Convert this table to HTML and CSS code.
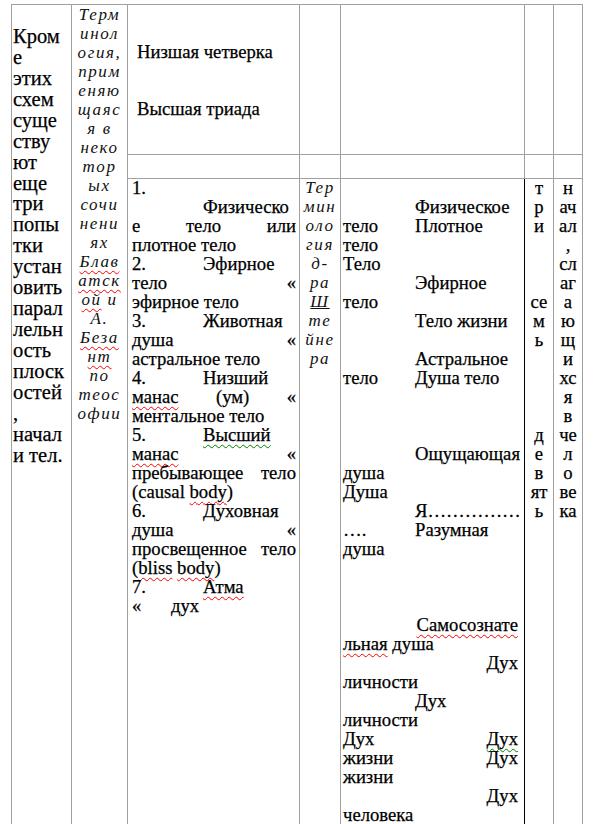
FILE: index.html
```
<!DOCTYPE html>
<html lang="ru">
<head>
<meta charset="utf-8">
<title>Таблица</title>
<link rel="stylesheet" href="styles.css">
</head>
<body>
<div class="tbl">
  <div class="c c1">
    <div class="l1"></div>
    <div class="l1">Кром</div>
    <div class="l1">е</div>
    <div class="l1">этих</div>
    <div class="l1">схем</div>
    <div class="l1">суще</div>
    <div class="l1">ству</div>
    <div class="l1">ют</div>
    <div class="l1">еще</div>
    <div class="l1">три</div>
    <div class="l1">попы</div>
    <div class="l1">тки</div>
    <div class="l1">устан</div>
    <div class="l1">овить</div>
    <div class="l1">парал</div>
    <div class="l1">лельн</div>
    <div class="l1">ость</div>
    <div class="l1">плоск</div>
    <div class="l1">остей</div>
    <div class="l1">,</div>
    <div class="l1">начал</div>
    <div class="l1">и тел.</div>
  </div>
  <div class="c c2 it">
    <div class="li">Терм</div>
    <div class="li">инол</div>
    <div class="li">огия,</div>
    <div class="li">прим</div>
    <div class="li">еняю</div>
    <div class="li">щаяс</div>
    <div class="li">я в</div>
    <div class="li">неко</div>
    <div class="li">тор</div>
    <div class="li">ых</div>
    <div class="li">сочи</div>
    <div class="li">нени</div>
    <div class="li">ях</div>
    <div class="li"><span class="sp">Блав</span></div>
    <div class="li"><span class="sp">атск</span></div>
    <div class="li"><span class="sp">ой</span> и</div>
    <div class="li">А.</div>
    <div class="li"><span class="sp">Беза</span></div>
    <div class="li"><span class="sp">нт</span></div>
    <div class="li">по</div>
    <div class="li">теос</div>
    <div class="li">офии</div>
  </div>

  <div class="c h3">
    <div class="ln">Низшая четверка</div>
    <div class="ln"></div>
    <div class="ln"></div>
    <div class="ln">Высшая триада</div>
  </div>
  <div class="c"></div>
  <div class="c"></div>
  <div class="c"></div>
  <div class="c"></div>

  <div class="c"></div>
  <div class="c"></div>
  <div class="c"></div>
  <div class="c"></div>
  <div class="c"></div>

  <div class="c r3 b3">
    <div class="ln">1.</div>
    <div class="ln"><span class="tab"></span>Физическо</div>
    <div class="ln j"><span>е</span><span>тело</span><span>или</span></div>
    <div class="ln">плотное тело</div>
    <div class="ln"><span class="tab">2.</span>Эфирное</div>
    <div class="ln j"><span>тело</span><span>«</span></div>
    <div class="ln">эфирное тело</div>
    <div class="ln"><span class="tab">3.</span>Животная</div>
    <div class="ln j"><span>душа</span><span>«</span></div>
    <div class="ln">астральное тело</div>
    <div class="ln"><span class="tab">4.</span>Низший</div>
    <div class="ln j"><span class="sp">манас</span><span>(ум)</span><span>«</span></div>
    <div class="ln">ментальное тело</div>
    <div class="ln"><span class="tab">5.</span><span class="gr">Высший</span></div>
    <div class="ln j"><span class="sp">манас</span><span>«</span></div>
    <div class="ln j"><span>пребывающее</span><span>тело</span></div>
    <div class="ln">(causal <span class="sp">body</span>)</div>
    <div class="ln"><span class="tab">6.</span>Духовная</div>
    <div class="ln j"><span>душа</span><span>«</span></div>
    <div class="ln j"><span>просвещенное</span><span>тело</span></div>
    <div class="ln">(<span class="sp">bliss</span> <span class="sp">body</span>)</div>
    <div class="ln"><span class="tab">7.</span><span class="sp">Атма</span></div>
    <div class="ln"><span class="q">«</span>дух</div>
  </div>
  <div class="c r3 b4 it">
    <div class="li">Тер</div>
    <div class="li">мин</div>
    <div class="li">оло</div>
    <div class="li">гия</div>
    <div class="li">д-</div>
    <div class="li">ра</div>
    <div class="li"><span class="ul">Ш</span></div>
    <div class="li">те</div>
    <div class="li">йне</div>
    <div class="li">ра</div>
  </div>
  <div class="c r3 b5">
    <div class="ln"></div>
    <div class="ln"><span class="a"></span>Физическое</div>
    <div class="ln"><span class="a">тело</span>Плотное</div>
    <div class="ln"><span class="a">тело</span></div>
    <div class="ln"><span class="a">Тело</span></div>
    <div class="ln"><span class="a"></span>Эфирное</div>
    <div class="ln"><span class="a">тело</span></div>
    <div class="ln"><span class="a"></span>Тело жизни</div>
    <div class="ln"></div>
    <div class="ln"><span class="a"></span>Астральное</div>
    <div class="ln"><span class="a">тело</span>Душа тело</div>
    <div class="ln"></div>
    <div class="ln"></div>
    <div class="ln"></div>
    <div class="ln"><span class="a"></span>Ощущающая</div>
    <div class="ln"><span class="a">душа</span></div>
    <div class="ln"><span class="a">Душа</span></div>
    <div class="ln"><span class="a"></span>Я……………</div>
    <div class="ln"><span class="a">….</span>Разумная</div>
    <div class="ln"><span class="a">душа</span></div>
    <div class="ln"></div>
    <div class="ln"></div>
    <div class="ln"></div>
    <div class="ln j"><span></span><span class="sp">Самосознате</span></div>
    <div class="ln"><span class="sp">льная</span>&nbsp;душа</div>
    <div class="ln j"><span></span><span>Дух</span></div>
    <div class="ln">личности</div>
    <div class="ln"><span class="a"></span>Дух</div>
    <div class="ln">личности</div>
    <div class="ln j"><span>Дух</span><span class="gr">Дух</span></div>
    <div class="ln j"><span>жизни</span><span>Дух</span></div>
    <div class="ln">жизни</div>
    <div class="ln j"><span></span><span>Дух</span></div>
    <div class="ln">человека</div>
  </div>
  <div class="c r3 b6">
    <div class="ln">т</div>
    <div class="ln">р</div>
    <div class="ln">и</div>
    <div class="ln"></div>
    <div class="ln"></div>
    <div class="ln"></div>
    <div class="ln">се</div>
    <div class="ln">м</div>
    <div class="ln">ь</div>
    <div class="ln"></div>
    <div class="ln"></div>
    <div class="ln"></div>
    <div class="ln"></div>
    <div class="ln">д</div>
    <div class="ln">е</div>
    <div class="ln">в</div>
    <div class="ln">ят</div>
    <div class="ln">ь</div>
  </div>
  <div class="c r3 b7">
    <div class="ln">н</div>
    <div class="ln">ач</div>
    <div class="ln">ал</div>
    <div class="ln">,</div>
    <div class="ln">сл</div>
    <div class="ln">аг</div>
    <div class="ln">а</div>
    <div class="ln">ю</div>
    <div class="ln">щ</div>
    <div class="ln">и</div>
    <div class="ln">хс</div>
    <div class="ln">я</div>
    <div class="ln">в</div>
    <div class="ln">че</div>
    <div class="ln">л</div>
    <div class="ln">о</div>
    <div class="ln">ве</div>
    <div class="ln">ка</div>
  </div>
</div>
</body>
</html>
```
FILE: styles.css
```
html {
  overflow: hidden;
}
body {
  margin: 0;
  background: #ffffff;
  color: #000000;
  font-family: "Liberation Serif", "Times New Roman", serif;
  font-size: 18.67px;
  -webkit-text-stroke: 0.25px #000000;
}
.tbl {
  display: grid;
  grid-template-columns: 60px 56px 172px 41px 184px 29px 29px;
  grid-template-rows: 150px 24px 700px;
  width: max-content;
  margin: 4px 0 0 11px;
  border-left: 1px solid #a0a0a0;
  border-top: 1px solid #a0a0a0;
}
.c {
  box-sizing: border-box;
  border-right: 1px solid #a0a0a0;
  border-bottom: 1px solid #a0a0a0;
  white-space: nowrap;
  overflow: visible;
}
.c1 {
  grid-row: 1 / 4;
  grid-column: 1;
  font-size: 20.5px;
  padding-left: 1px;
}
.l1 {
  height: 20.95px;
  line-height: 20.95px;
}
.c2 {
  grid-row: 1 / 4;
  grid-column: 2;
  text-align: center;
  padding-top: 0;
}
.it {
  font-family: "Liberation Serif", "Times New Roman", serif;
  font-style: italic;
  font-size: 17px;
  letter-spacing: 1.6px;
  color: #111111;
  -webkit-text-stroke: 0;
}
.li {
  height: 19px;
  line-height: 19px;
}
.ln {
  height: 19px;
  line-height: 19px;
}
.r3 {
  padding-top: 0;
}
.r3 > .ln:first-child,
.r3 > .li:first-child {
  margin-top: -1px;
}
.h3 {
  display: flex;
  flex-direction: column;
  justify-content: center;
  padding-left: 9px;
}
.b3 {
  padding: 0 3px 0 4px;
}
.j {
  display: flex;
  justify-content: space-between;
}
.tab {
  display: inline-block;
  width: 71px;
}
.q {
  display: inline-block;
  width: 39px;
}
.b4 {
  text-align: center;
}
.b5 {
  padding: 0 6px 0 2px;
  border-right-color: #000000;
}
.a {
  display: inline-block;
  width: 72px;
}
.b6,
.b7 {
  text-align: center;
}
.sp {
  text-decoration: underline wavy #ff0000;
  text-decoration-thickness: 1px;
  text-underline-offset: 3px;
  text-decoration-skip-ink: none;
}
.gr {
  text-decoration: underline wavy #008000;
  text-decoration-thickness: 1px;
  text-underline-offset: 3px;
  text-decoration-skip-ink: none;
}
.ul {
  text-decoration: underline;
  text-decoration-thickness: 1px;
}
```
